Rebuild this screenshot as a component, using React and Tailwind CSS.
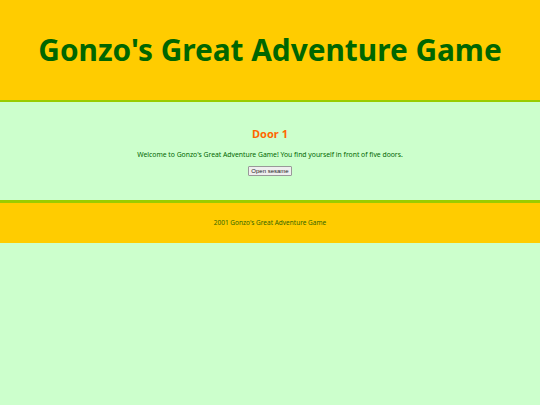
import React from 'react';

const font = { fontFamily: '"Comic Sans MS", "Noto Sans", sans-serif' };

export default function App() {
    return (
        <div className="min-h-[405px] bg-[#ccffcc] text-[#006600]" style={font}>
            <header className="h-[102px] bg-[#ffcc00] border-b-2 border-[#99cc00] flex items-center justify-center">
                <h1 className="text-[29.8px] font-bold text-[#006600]">Gonzo's Great Adventure Game</h1>
            </header>

            <main className="h-[98px] flex flex-col items-center pt-[24px]">
                <h2 className="text-[11px] font-bold text-[#ff6600] leading-[16px]">Door 1</h2>
                <p className="mt-[8px] text-[6.8px] leading-[10px] text-[#006600]">
                    Welcome to Gonzo's Great Adventure Game! You find yourself in front of five doors.
                </p>
                <button className="mt-[6px] px-[2px] h-[10px] text-[6px] leading-none bg-[#efefef] text-[#222] border border-[#999] rounded-[1px]" style={{ fontFamily: '"Liberation Sans", sans-serif' }}>
                    Open sesame
                </button>
            </main>

            <footer className="h-[43px] bg-[#ffcc00] border-t-[3px] border-[#99cc00] flex items-center justify-center">
                <p className="text-[6.5px] text-[#336600]">2001 Gonzo's Great Adventure Game</p>
            </footer>
        </div>
    );
}
